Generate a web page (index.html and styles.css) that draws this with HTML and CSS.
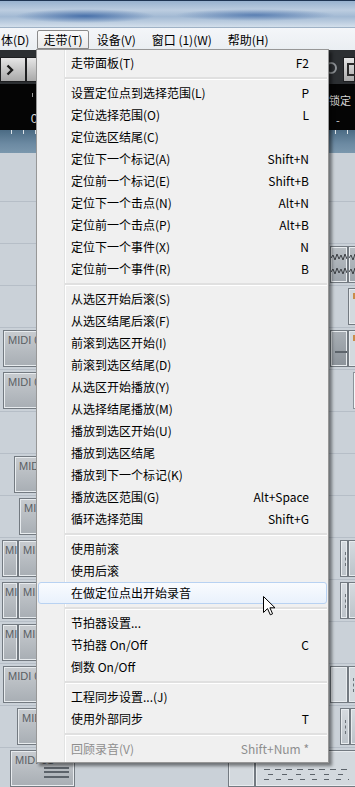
FILE: index.html
```html
<!DOCTYPE html>
<html lang="zh-CN">
<head>
    <meta charset="UTF-8">
    <meta name="viewport" content="width=device-width, initial-scale=1.0">
    <title>走带菜单</title>
    <link rel="stylesheet" href="styles.css">
</head>
<body>
<div class="app">
    <div class="titlebar"></div>

    <div class="menubar">
        <span class="mb-item first">体(D)</span>
        <span class="mb-item open">走带(T)</span>
        <span class="mb-item">设备(V)</span>
        <span class="mb-item">窗口 (1)(W)</span>
        <span class="mb-item">帮助(H)</span>
    </div>

    <div class="toolbar">
        <div class="tb-btn tb-next">
            <svg width="8" height="12" viewBox="0 0 8 12"><polyline points="1.5,1.5 6,6 1.5,10.5" fill="none" stroke="#1b1b1b" stroke-width="2.4"/></svg>
        </div>
        <div class="tb-btn tb-small"></div>
        <div class="tb-fill"></div>
        <div class="tb-round"></div>
        <div class="tb-btn tb-square"><span></span></div>
    </div>

    <div class="transport">
        <div class="tp-left">
            <span class="tp-tick"></span>
            <span class="tp-digit">0</span>
        </div>
        <div class="tp-right">
            <span>锁定</span>
            <span class="tp-dash">-</span>
        </div>
    </div>

    <div class="ruler"></div>

    <div class="tracks">
        <div class="lane"></div>
        <div class="lane"></div>
        <div class="lane">
            <div class="part audio" style="left:330px;width:18px"><svg width="18" height="30" viewBox="0 0 18 30"><polyline points="0,8 2,5 4,10 6,4 8,9 10,5 12,10 14,4 16,9 18,6" fill="none" stroke="#3c4044" stroke-width="1"/><polyline points="0,22 2,19 4,24 6,18 8,23 10,19 12,24 14,18 16,23 18,20" fill="none" stroke="#3c4044" stroke-width="1"/></svg></div>
            <div class="part audio" style="left:348px;width:14px"><svg width="14" height="30" viewBox="0 0 14 30"><polyline points="0,8 2,5 4,10 6,4 8,9 10,5 12,10 14,4" fill="none" stroke="#3c4044" stroke-width="1"/><polyline points="0,22 2,19 4,24 6,18 8,23 10,19 12,24 14,18" fill="none" stroke="#3c4044" stroke-width="1"/></svg></div>
        </div>
        <div class="lane">
            <div class="part light" style="left:348px;width:14px"><span class="mark"></span></div>
        </div>
        <div class="lane">
            <div class="part" style="left:3px;width:80px">MIDI 01</div>
            <div class="part dark" style="left:330px;width:18px"><span class="bar"></span></div>
            <div class="part light" style="left:348px;width:14px"><span class="mark"></span></div>
        </div>
        <div class="lane">
            <div class="part" style="left:3px;width:80px">MIDI 01</div>
            <div class="part outline" style="left:353px;width:10px"></div>
        </div>
        <div class="lane"></div>
        <div class="lane">
            <div class="part" style="left:14px;width:60px">MIDI 01</div>
        </div>
        <div class="lane">
            <div class="part" style="left:19px;width:60px">MIDI 01</div>
        </div>
        <div class="lane">
            <div class="part narrow" style="left:2px;width:16px">MI</div>
            <div class="part" style="left:18px;width:50px">MIDI 01</div>
            <div class="part thin" style="left:340px;width:8px"><span class="dots"></span></div>
            <div class="part thin" style="left:348px;width:10px"></div>
        </div>
        <div class="lane">
            <div class="part narrow" style="left:2px;width:16px">MI</div>
            <div class="part" style="left:18px;width:50px">MIDI 01</div>
            <div class="part thin" style="left:340px;width:8px"><span class="dots"></span></div>
            <div class="part thin" style="left:348px;width:10px"></div>
        </div>
        <div class="lane">
            <div class="part narrow" style="left:2px;width:16px">MI</div>
            <div class="part" style="left:18px;width:50px">MIDI 01</div>
        </div>
        <div class="lane">
            <div class="part" style="left:3px;width:80px">MIDI 01</div>
            <div class="part light" style="left:330px;width:18px"></div>
            <div class="part light" style="left:348px;width:12px"><span class="dots"></span></div>
        </div>
        <div class="lane">
            <div class="part" style="left:17px;width:60px">MIDI 01</div>
            <div class="part thin" style="left:340px;width:10px"><span class="dots"></span></div>
            <div class="part thin" style="left:350px;width:10px"></div>
        </div>
        <div class="lane">
            <div class="part" style="left:10px;width:65px">MIDI 01<span class="notes"></span></div>
            <div class="part light" style="left:228px;width:27px"></div>
            <div class="part light" style="left:255px;width:105px"><span class="dashes"></span></div>
        </div>
    </div>

    <div class="menu">
        <div class="item"><span>走带面板(T)</span><span>F2</span></div>
        <div class="sep"></div>
        <div class="item"><span>设置定位点到选择范围(L)</span><span>P</span></div>
        <div class="item"><span>定位选择范围(O)</span><span>L</span></div>
        <div class="item"><span>定位选区结尾(C)</span><span></span></div>
        <div class="item"><span>定位下一个标记(A)</span><span>Shift+N</span></div>
        <div class="item"><span>定位前一个标记(E)</span><span>Shift+B</span></div>
        <div class="item"><span>定位下一个击点(N)</span><span>Alt+N</span></div>
        <div class="item"><span>定位前一个击点(P)</span><span>Alt+B</span></div>
        <div class="item"><span>定位下一个事件(X)</span><span>N</span></div>
        <div class="item"><span>定位前一个事件(R)</span><span>B</span></div>
        <div class="sep"></div>
        <div class="item"><span>从选区开始后滚(S)</span><span></span></div>
        <div class="item"><span>从选区结尾后滚(F)</span><span></span></div>
        <div class="item"><span>前滚到选区开始(I)</span><span></span></div>
        <div class="item"><span>前滚到选区结尾(D)</span><span></span></div>
        <div class="item"><span>从选区开始播放(Y)</span><span></span></div>
        <div class="item"><span>从选择结尾播放(M)</span><span></span></div>
        <div class="item"><span>播放到选区开始(U)</span><span></span></div>
        <div class="item"><span>播放到选区结尾</span><span></span></div>
        <div class="item"><span>播放到下一个标记(K)</span><span></span></div>
        <div class="item"><span>播放选区范围(G)</span><span>Alt+Space</span></div>
        <div class="item"><span>循环选择范围</span><span>Shift+G</span></div>
        <div class="sep"></div>
        <div class="item"><span>使用前滚</span><span></span></div>
        <div class="item"><span>使用后滚</span><span></span></div>
        <div class="item hover"><span>在做定位点出开始录音</span><span></span></div>
        <div class="sep"></div>
        <div class="item"><span>节拍器设置...</span><span></span></div>
        <div class="item"><span>节拍器 On/Off</span><span>C</span></div>
        <div class="item"><span>倒数 On/Off</span><span></span></div>
        <div class="sep"></div>
        <div class="item"><span>工程同步设置...(J)</span><span></span></div>
        <div class="item"><span>使用外部同步</span><span>T</span></div>
        <div class="sep"></div>
        <div class="item disabled"><span>回顾录音(V)</span><span>Shift+Num *</span></div>
    </div>

    <svg class="pointer" width="13" height="20" viewBox="0 0 13 20">
        <path d="M0.5 0.5 L0.5 16.5 L4.5 12.6 L7.3 18.8 L9.6 17.8 L6.9 11.8 L12 11.8 Z" fill="#fff" stroke="#000" stroke-width="1" stroke-linejoin="miter"/>
    </svg>
</div>
</body>
</html>
```

FILE: styles.css
```css
* {
    box-sizing: border-box;
}

body {
    margin: 0;
    width: 355px;
    height: 787px;
    overflow: hidden;
    font-family: "Noto Sans CJK SC", "Noto Sans", sans-serif;
    font-size: 12px;
    color: #000;
    background: #c9d0d7;
}

.app {
    position: relative;
    width: 355px;
    height: 787px;
    overflow: hidden;
}

/* window chrome */
.titlebar {
    height: 28px;
    border-top: 1px solid #1f3553;
    border-bottom: 1px solid #9fb2c6;
    background:
        radial-gradient(ellipse 70px 7px at 85px 15px, rgba(50, 95, 160, 0.8), transparent),
        radial-gradient(ellipse 80px 6px at 255px 14px, rgba(50, 95, 160, 0.65), transparent),
        linear-gradient(#98b2cf, #bccde0 35%, #a2b9d3 60%, #d3dfeb);
}

.menubar {
    height: 22px;
    display: flex;
    align-items: flex-end;
    padding-bottom: 1px;
    background: linear-gradient(#f4f6f9, #eaeef2);
}

.mb-item {
    height: 19px;
    line-height: 17px;
    padding: 0 7px;
    border: 1px solid transparent;
    white-space: nowrap;
}

.mb-item.first {
    padding-left: 0;
    padding-right: 7px;
}

.mb-item.open {
    padding: 0 5px;
    border-color: #8b8b8b;
    border-radius: 2px 2px 0 0;
    background: linear-gradient(#fafafa, #e9e9e9);
}

/* cubase toolbar */
.toolbar {
    height: 34px;
    display: flex;
    align-items: flex-start;
    padding-top: 7px;
    background: #2c2f32;
}

.tb-btn {
    height: 25px;
    border: 1px solid #1e1f21;
    background: linear-gradient(#e6e6e6, #c4c4c4 55%, #a9a9a9);
}

.tb-next {
    width: 26px;
    display: flex;
    align-items: center;
    padding-left: 5px;
}

.tb-small {
    width: 14px;
}

.tb-fill {
    flex: 1;
}

.tb-round {
    width: 12px;
    height: 12px;
    margin: 5px 6px 0 0;
    border-radius: 50%;
    border: 2px solid #8e9296;
}

.tb-square {
    width: 12px;
    padding: 5px 0 0 3px;
}

.tb-square span {
    display: block;
    width: 12px;
    height: 13px;
    border: 2px solid #2a2a2a;
}

.transport {
    height: 46px;
    display: flex;
    justify-content: space-between;
    background: #050505;
    color: #d6d6d6;
}

.tp-left {
    width: 36px;
    display: flex;
    flex-direction: column;
    align-items: flex-end;
    padding-top: 9px;
}

.tp-tick {
    width: 1px;
    height: 4px;
    margin-right: 3px;
    background: #9a9a9a;
}

.tp-digit {
    margin-top: 15px;
    margin-right: -2px;
    font-family: "Liberation Sans", sans-serif;
    font-size: 13px;
    line-height: 14px;
}

.tp-right {
    width: 26px;
    display: flex;
    flex-direction: column;
    padding-top: 9px;
    font-size: 11px;
    line-height: 14px;
    white-space: nowrap;
}

.tp-dash {
    margin: 6px 0 0 7px;
}

.ruler {
    height: 23px;
    background:
        repeating-linear-gradient(to right, transparent 0, transparent 11px, rgba(255, 255, 255, 0.8) 11px, rgba(255, 255, 255, 0.8) 12px) top / 100% 4px no-repeat,
        linear-gradient(#4b6b84, #6c8aa2 60%, #7a97ad);
}

.tracks {
    padding-top: 7px;
    background: #cad1d8;
}

.lane {
    position: relative;
    height: 42px;
    border-bottom: 1px solid #b6bec7;
}

.part {
    position: absolute;
    top: 2px;
    height: 37px;
    padding: 3px 0 0 4px;
    overflow: hidden;
    white-space: nowrap;
    border: 1px solid #737a81;
    box-shadow: inset 0 0 0 1px #e8ecef;
    background: linear-gradient(#c8ccd0, #a8aeb4);
    color: #5a5f64;
    font-family: "Liberation Sans", sans-serif;
    font-size: 11px;
    line-height: 13px;
}

.part.narrow {
    padding-left: 2px;
}

.part.audio {
    padding: 3px 0 0 0;
    background: linear-gradient(#b9bfc4, #9ea5ac);
}

.part.dark {
    background: linear-gradient(#a9afb5, #8c939a);
}

.part.light {
    background: #d3d9de;
}

.part.thin {
    background: linear-gradient(#d6dbe0, #bcc3c9);
}

.part.outline {
    background: #d8dee3;
    border-color: #8b939a;
    box-shadow: inset 0 0 0 1px #f3f5f7;
}

.bar {
    display: block;
    width: 12px;
    height: 2px;
    margin-top: 17px;
    background: #5d646b;
}

.mark {
    display: block;
    width: 6px;
    height: 6px;
    margin-top: 1px;
    background: #c98c4a;
}

.dots {
    display: block;
    width: 1px;
    height: 14px;
    margin: 8px 0 0 0;
    border-left: 1px dashed #6b7279;
}

.notes {
    position: absolute;
    left: 33px;
    top: 16px;
    width: 25px;
    height: 11px;
    border-top: 2px solid #5c636a;
    border-bottom: 2px solid #5c636a;
}

.notes::after {
    content: "";
    display: block;
    margin-top: 2px;
    height: 2px;
    background: #5c636a;
}

.dashes {
    position: absolute;
    left: 8px;
    top: 18px;
    width: 85px;
    height: 12px;
    background:
        repeating-linear-gradient(to right, #5c636a 0, #5c636a 6px, transparent 6px, transparent 11px) 0 0 / 100% 1px no-repeat,
        repeating-linear-gradient(to right, transparent 0, transparent 4px, #5c636a 4px, #5c636a 9px, transparent 9px, transparent 14px) 0 5px / 100% 1px no-repeat,
        repeating-linear-gradient(to right, #5c636a 0, #5c636a 5px, transparent 5px, transparent 12px) 0 10px / 100% 1px no-repeat;
}

/* dropdown menu */
.menu {
    position: absolute;
    left: 36px;
    top: 49px;
    width: 293px;
    padding: 2px 1px;
    border: 1px solid #979797;
    background: #f0f0f0 linear-gradient(to right, transparent 27px, #e2e3e3 27px, #e2e3e3 28px, #fff 28px, #fff 29px, transparent 29px);
    box-shadow: 3px 3px 3px rgba(0, 0, 0, 0.45);
}

.item {
    height: 22px;
    line-height: 20px;
    display: flex;
    justify-content: space-between;
    padding: 0 17px 0 32px;
    border: 1px solid transparent;
    border-radius: 3px;
    white-space: nowrap;
}

.item.hover {
    border-color: #b8d2f2;
    background: linear-gradient(#f9fbfe, #e9f1fc);
}

.item.disabled {
    color: #8e8e8e;
}

.sep {
    height: 8px;
    padding-top: 3px;
    margin-left: 27px;
}

.sep::before {
    content: "";
    display: block;
    height: 2px;
    background: #e0e0e0;
    border-bottom: 1px solid #fff;
}

.pointer {
    position: absolute;
    left: 263px;
    top: 596px;
}
```
